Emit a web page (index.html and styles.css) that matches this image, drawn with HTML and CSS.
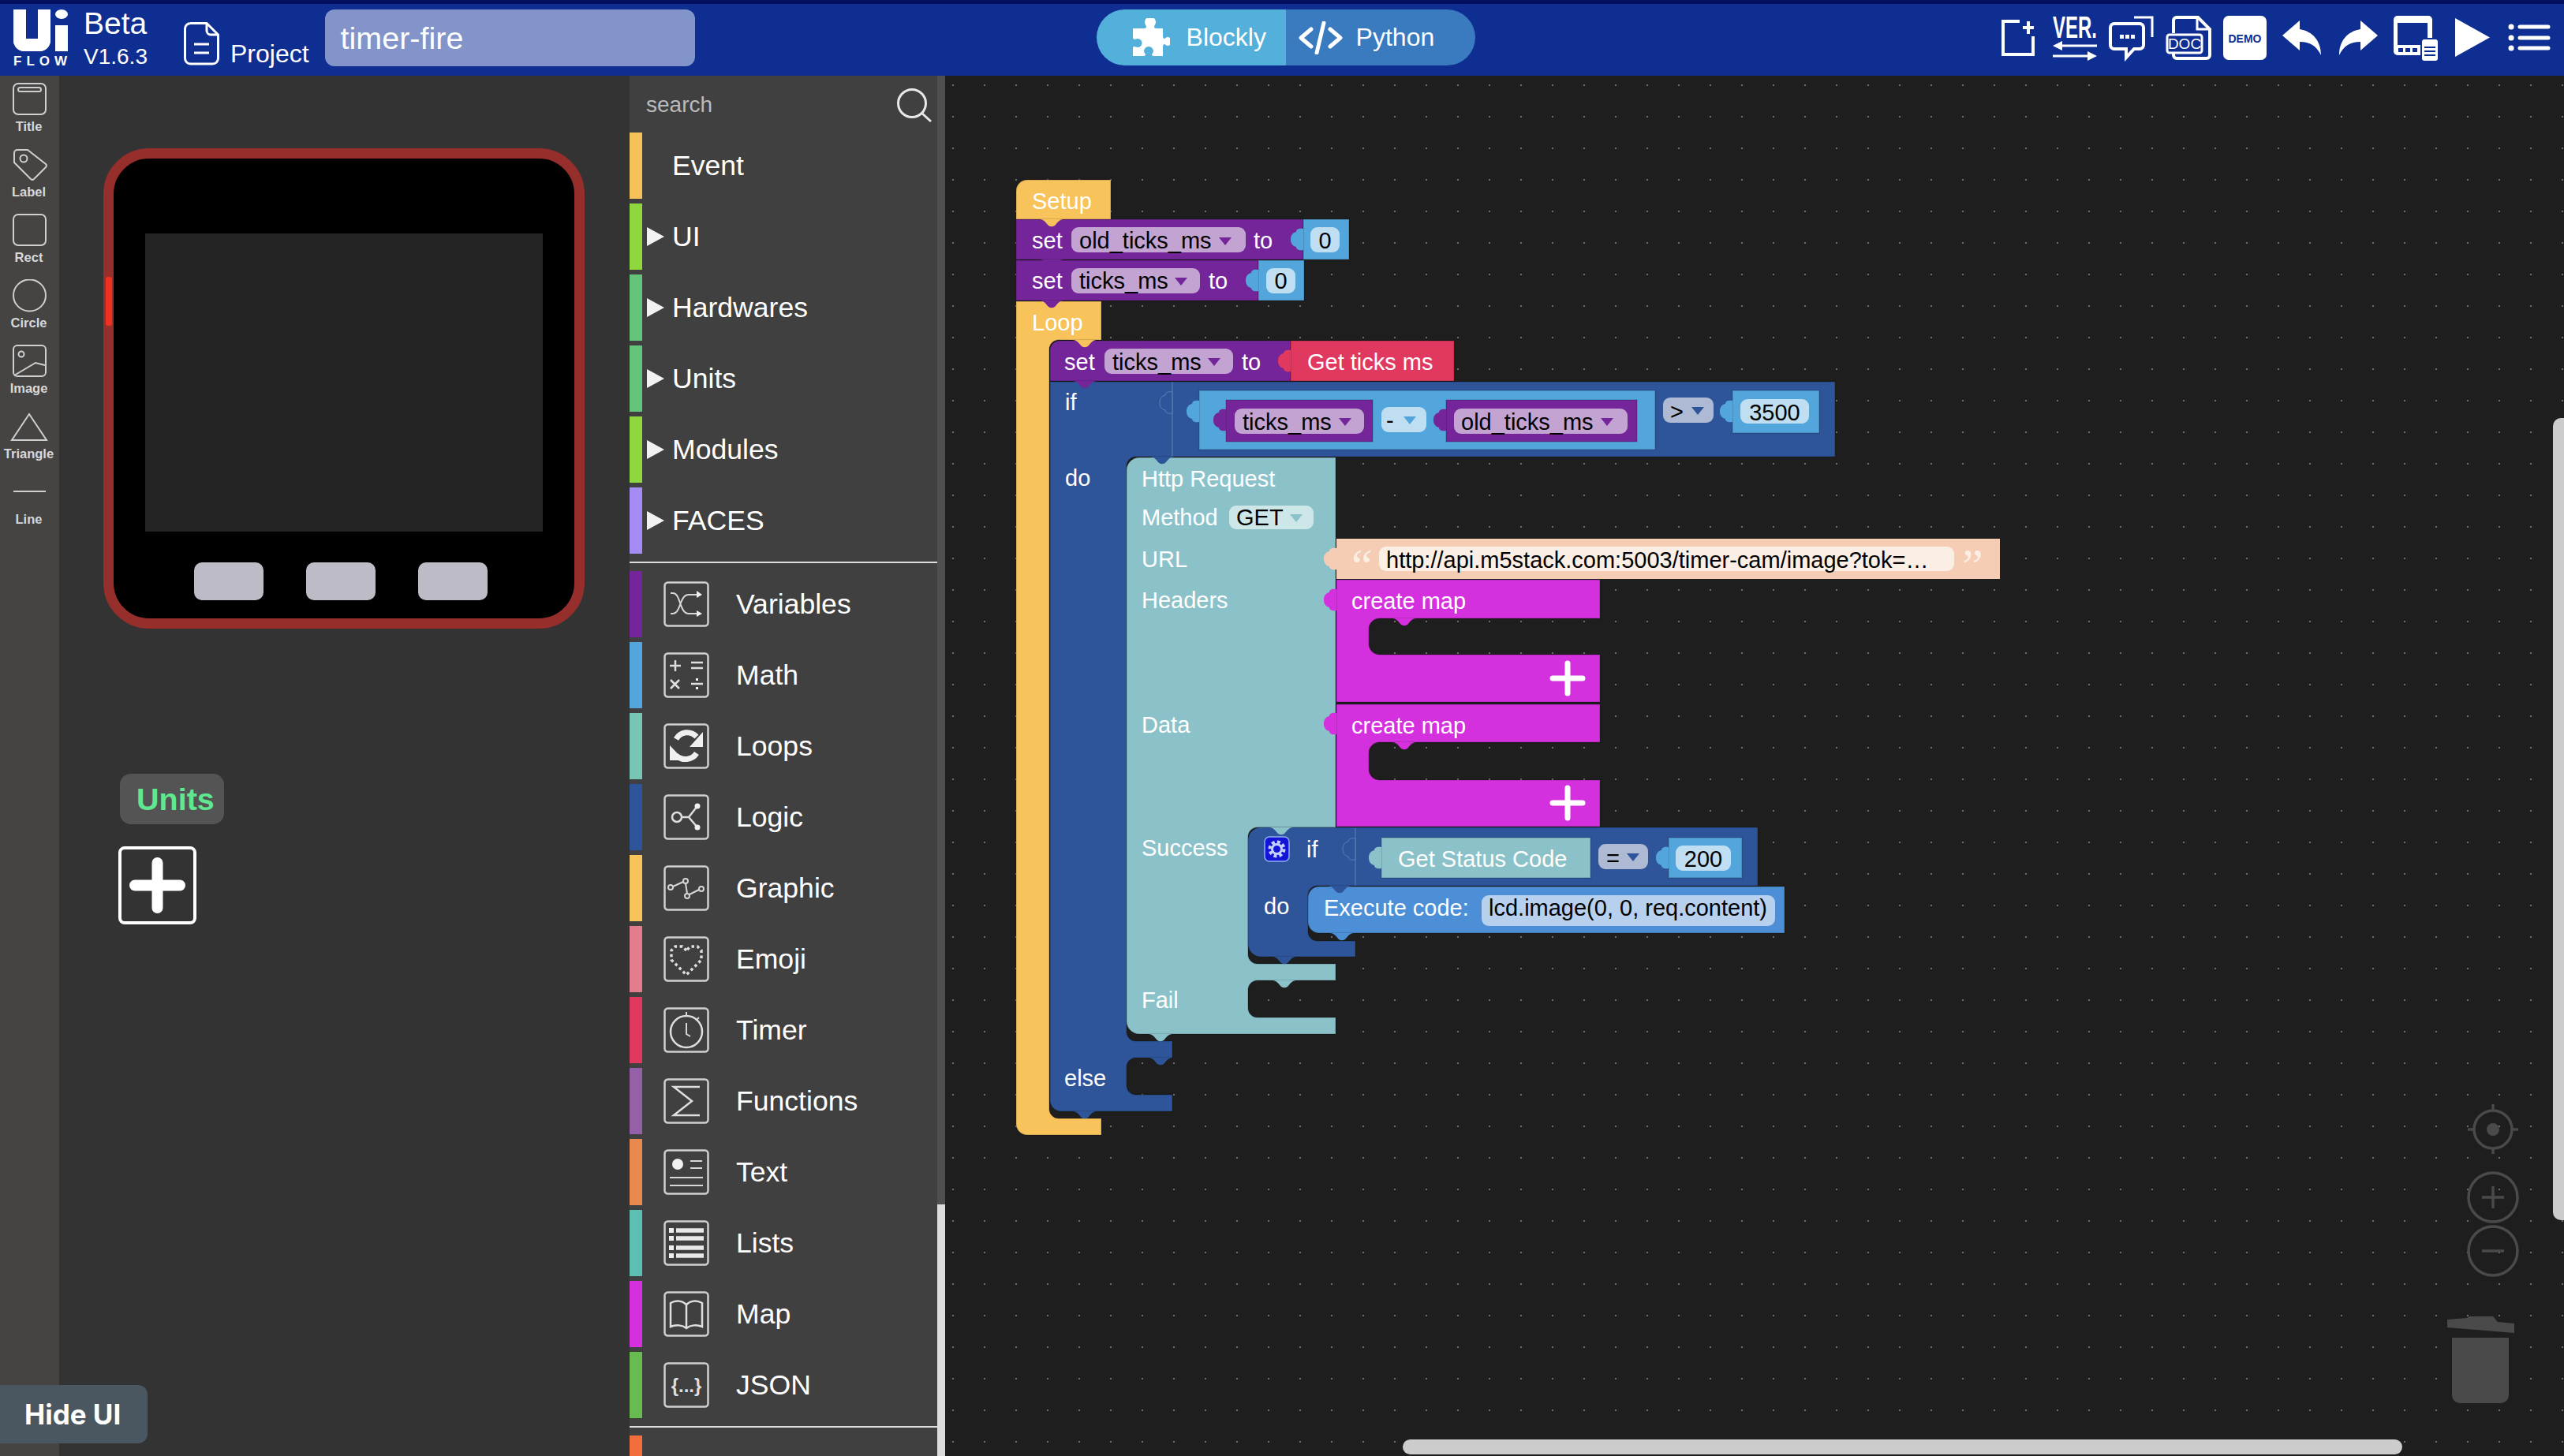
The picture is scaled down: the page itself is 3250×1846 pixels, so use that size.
FILE: index.html
```html
<!DOCTYPE html>
<html lang="en">
<head>
<meta charset="utf-8">
<title>UiFlow - timer-fire</title>
<link rel="stylesheet" href="styles.css">
</head>
<body>
<header class="topbar">
  <div class="logo" role="img" aria-label="UiFlow">
    <div class="logo-mark"><span class="logo-u"></span><span class="logo-i"><i></i><b></b></span></div>
    <div class="logo-flow">FLOW</div>
  </div>
  <div class="version"><div class="beta">Beta</div><div class="vnum">V1.6.3</div></div>
  <div class="project">
    <svg width="45" height="55" viewBox="0 0 45 55"><path class="ic-stroke" d="M8 1.500H29L43.500 16V46a7 7 0 0 1-7 7H8.500a7 7 0 0 1-7-7V8.500a7 7 0 0 1 7-7Z"/><path class="ic-stroke" d="M29 2V11a5 5 0 0 0 5 5H43M13 28H32M13 39H32"/></svg>
    <span>Project</span>
  </div>
  <div class="name-field">timer-fire</div>
  <div class="mode">
    <div class="mode-a">
      <svg width="48" height="50" viewBox="0 0 48 50"><path class="ic-fill" d="M16 5a7 7 0 0 1 14 0c0 3-2 4-2 6 0 1 1 2 3 2h8v10c0 2 1 3 2 3 1 0 2-2 4-2a5.500 5.500 0 0 1 0 11c-2 0-3-2-4-2-1 0-2 1-2 3v12H27c-1 0-2-1-2-2s2-2 2-4a6 6 0 0 0-12 0c0 2 2 3 2 4s-1 2-2 2H1V38c0-2 1-2 2-2s2 1 4 1a5.500 5.500 0 0 0 0-11c-2 0-3 1-4 1s-2-1-2-3V13h14c2 0 3-1 3-2 0-2-2-3-2-6Z"/></svg>
      <span>Blockly</span>
    </div>
    <div class="mode-b">
      <svg width="56" height="42" viewBox="0 0 56 42"><path class="ic-round" d="M16 10 3 21l13 11M40 10l13 11-13 11M32 2 23 40"/></svg>
      <span>Python</span>
    </div>
  </div>
  <nav class="actions">
    <svg width="72" height="96" viewBox="0 0 72 96"><path class="ic-stroke4" d="M38 27H17V69H55V46"/><path class="ic-stroke4" d="M49 27V43M42 35H56"/></svg>
    <svg width="72" height="96" viewBox="0 0 72 96"><text class="ver-text" transform="translate(8 48) scale(1 1.600)">VER.</text><path class="ic-stroke3" d="M20 58H64M8 71H52"/><path class="ic-fill" d="M8 58l12-6v12ZM64 71l-12-6v12Z"/></svg>
    <svg width="72" height="96" viewBox="0 0 72 96"><path class="ic-stroke4" d="M14 30H46a5 5 0 0 1 5 5V57a5 5 0 0 1-5 5H39L29 73V62H14a5 5 0 0 1-5-5V35a5 5 0 0 1 5-5Z"/><path class="ic-stroke3" d="M39 22H62V47"/><path class="ic-fill" d="M21 44h5v5h-5ZM28 44h5v5h-5ZM35 44h5v5h-5Z"/></svg>
    <svg width="72" height="96" viewBox="0 0 72 96"><path class="ic-stroke4" d="M17 42V26a4 4 0 0 1 4-4H48L63 37V70a4 4 0 0 1-4 4H21a4 4 0 0 1-4-4V67"/><path class="ic-stroke3" d="M47 23V37H62"/><rect class="doc-box" x="9" y="44" width="44" height="23" rx="3"/><text class="doc-text" x="31" y="62" text-anchor="middle">DOC</text></svg>
    <svg width="72" height="96" viewBox="0 0 72 96"><rect class="ic-fill" x="8" y="20" width="55" height="56" rx="7"/><text class="demo-text" x="35.500" y="54" text-anchor="middle">DEMO</text></svg>
    <svg width="72" height="96" viewBox="0 0 72 96"><path class="ic-fill" d="M11 45 33 26V37C50 40 60 52 60 70 54 58 46 53 33 53V64Z"/></svg>
    <svg width="72" height="96" viewBox="0 0 72 96"><path class="ic-fill" d="M60 45 38 26V37C21 40 11 52 11 70 17 58 25 53 38 53V64Z"/></svg>
    <svg width="72" height="96" viewBox="0 0 72 96"><rect class="ic-fill" x="8" y="20" width="49" height="50" rx="5"/><rect class="hole" x="13" y="29" width="38" height="28" /><path class="hole" d="M14 61h6v5h-6ZM23 61h6v5h-6ZM32 61h6v5h-6Z"/><rect class="hole" x="42" y="48" width="24" height="30"/><rect class="ic-fill" x="44" y="50" width="20" height="27" rx="3"/><path class="hole-line" d="M47 60H61M47 65H61M47 70H61"/></svg>
    <svg width="72" height="96" viewBox="0 0 72 96"><path class="ic-fill" d="M14 23 58 47.500 14 72Z"/></svg>
    <svg width="72" height="96" viewBox="0 0 72 96"><path class="ic-stroke4r" d="M24 34H60M24 48H60M24 61H60"/><path class="ic-dots" d="M13 34h.1M13 48h.1M13 61h.1"/></svg>
  </nav>
</header>

<main class="main">
  <aside class="rail">
    <div class="tool"><svg width="70" height="42" viewBox="0 0 70 42"><rect class="r-line" x="15" y="1" width="41" height="39" rx="6"/><rect class="r-line" x="21" y="6" width="29" height="5" rx="2.500"/></svg><span>Title</span></div>
    <div class="tool"><svg width="70" height="42" viewBox="0 0 70 42"><path class="r-line" d="M20 2H33L56 20a3 3 0 0 1 0 4L41 39a3 3 0 0 1-4 0L16 18V6a4 4 0 0 1 4-4Z"/><circle class="r-line" cx="28" cy="13" r="4.500"/></svg><span>Label</span></div>
    <div class="tool"><svg width="70" height="42" viewBox="0 0 70 42"><rect class="r-line" x="15" y="1" width="41" height="39" rx="6"/></svg><span>Rect</span></div>
    <div class="tool"><svg width="70" height="42" viewBox="0 0 70 42"><ellipse class="r-line" cx="35.500" cy="20.500" rx="20.500" ry="20"/></svg><span>Circle</span></div>
    <div class="tool"><svg width="70" height="42" viewBox="0 0 70 42"><rect class="r-line" x="15" y="1" width="41" height="39" rx="5"/><circle class="r-line" cx="25" cy="12" r="3.500"/><path class="r-line" d="M16 39 43 23 55 26"/></svg><span>Image</span></div>
    <div class="tool"><svg width="70" height="42" viewBox="0 0 70 42"><path class="r-line" d="M35 5 13 38H57Z"/></svg><span>Triangle</span></div>
    <div class="tool"><svg width="70" height="42" viewBox="0 0 70 42"><path class="r-line" d="M15 20H56"/></svg><span>Line</span></div>
  </aside>

  <section class="stage">
    <div class="device">
      <span class="side-mark"></span>
      <div class="screen"></div>
      <div class="hw-buttons"><span></span><span></span><span></span></div>
    </div>
    <div class="units-tag">Units</div>
    <div class="units-add"><svg width="71" height="71" viewBox="0 0 71 71"><path class="plus-big" d="M35.500 7V64M7 35.500H64"/></svg></div>
  </section>

  <aside class="toolbox">
    <div class="tb-list">
      <div class="search"><span>search</span>
        <svg width="46" height="44" viewBox="0 0 46 44"><circle class="s-line" cx="20" cy="19" r="17.500"/><path class="s-line" d="M32 31 44 42"/></svg>
      </div>
      <div class="cats">
        <div class="cat c-event"><span class="no-caret"></span>Event</div>
        <div class="cat c-lime"><span class="caret"></span>UI</div>
        <div class="cat c-green"><span class="caret"></span>Hardwares</div>
        <div class="cat c-green"><span class="caret"></span>Units</div>
        <div class="cat c-lime"><span class="caret"></span>Modules</div>
        <div class="cat c-faces"><span class="caret"></span>FACES</div>
      </div>
      <div class="tb-rule"></div>
      <div class="cats">
        <div class="cat lib c-var"><svg width="58" height="58" viewBox="0 0 58 58"><rect class="box" x="1.500" y="1.500" width="55" height="55" rx="4"/><path class="i-line" d="M9 15H12C22 15 20 41 32 41H44M9 41H12C22 41 20 17 32 17H44"/><path class="i-fill" d="M42 12 49 17 42 21ZM42 37 49 41 42 45Z"/></svg>Variables</div>
        <div class="cat lib c-math"><svg width="58" height="58" viewBox="0 0 58 58"><rect class="box" x="1.500" y="1.500" width="55" height="55" rx="4"/><path class="i-line2" d="M8 17H22M15 10V24M35 13H50M35 20H50M9 35 20 46M20 35 9 46M35 40H50"/><path class="i-fill" d="M41 33h3v3h-3ZM41 44h3v3h-3Z"/></svg>Math</div>
        <div class="cat lib c-loop"><svg width="58" height="58" viewBox="0 0 58 58"><rect class="box" x="1.500" y="1.500" width="55" height="55" rx="4"/><path class="i-thick" d="M16 20C22 10 34 9 42 17M42 38C36 47 24 48 16 41"/><path class="i-fill" d="M50 11V30H33ZM8 28V47H26Z"/></svg>Loops</div>
        <div class="cat lib c-logic"><svg width="58" height="58" viewBox="0 0 58 58"><rect class="box" x="1.500" y="1.500" width="55" height="55" rx="4"/><circle class="i-line2" cx="17" cy="29" r="6"/><path class="i-line2" d="M23 29H32L43 15M32 29 43 42"/><circle class="i-fill" cx="43" cy="15" r="3.500"/><circle class="i-fill" cx="43" cy="42" r="3.500"/></svg>Logic</div>
        <div class="cat lib c-graphic"><svg width="58" height="58" viewBox="0 0 58 58"><rect class="box" x="1.500" y="1.500" width="55" height="55" rx="4"/><path class="i-line" d="M12 27 25 21M28 23 30 36M33 37 45 31"/><circle class="i-line" cx="9" cy="28" r="3"/><circle class="i-line" cx="28" cy="20" r="3"/><circle class="i-line" cx="30" cy="39" r="3"/><circle class="i-line" cx="48" cy="30" r="3"/></svg>Graphic</div>
        <div class="cat lib c-emoji"><svg width="58" height="58" viewBox="0 0 58 58"><rect class="box" x="1.500" y="1.500" width="55" height="55" rx="4"/><path class="i-dots" d="M29 18 24 13H15L10 18V30L29 49 48 30V18L43 13H34Z"/></svg>Emoji</div>
        <div class="cat lib c-timer"><svg width="58" height="58" viewBox="0 0 58 58"><rect class="box" x="1.500" y="1.500" width="55" height="55" rx="4"/><circle class="i-line2" cx="29" cy="31" r="20"/><path class="i-line" d="M29 6V11M45 13 42 16M29 20V34L34 37"/></svg>Timer</div>
        <div class="cat lib c-func"><svg width="58" height="58" viewBox="0 0 58 58"><rect class="box" x="1.500" y="1.500" width="55" height="55" rx="4"/><path class="i-line2" d="M46 11H13L36 29 13 47H46"/></svg>Functions</div>
        <div class="cat lib c-text"><svg width="58" height="58" viewBox="0 0 58 58"><rect class="box" x="1.500" y="1.500" width="55" height="55" rx="4"/><circle class="i-fill" cx="18" cy="19" r="7"/><path class="i-line" d="M34 15H49M34 24H49M8 36H50M8 46H50"/></svg>Text</div>
        <div class="cat lib c-list"><svg width="58" height="58" viewBox="0 0 58 58"><rect class="box" x="1.500" y="1.500" width="55" height="55" rx="4"/><path class="i-bars" d="M16 13H51M16 23H51M16 35H51M16 45H51"/><path class="i-fill" d="M7 10h6v6H7ZM7 20h6v6H7ZM7 32h6v6H7ZM7 42h6v6H7Z"/></svg>Lists</div>
        <div class="cat lib c-map"><svg width="58" height="58" viewBox="0 0 58 58"><rect class="box" x="1.500" y="1.500" width="55" height="55" rx="4"/><path class="i-line2" d="M29 17C24 12 16 11 9 15V45C16 42 24 43 29 47 34 43 42 42 49 45V15C42 11 34 12 29 17ZM29 17V47"/></svg>Map</div>
        <div class="cat lib c-json"><svg width="58" height="58" viewBox="0 0 58 58"><rect class="box" x="1.500" y="1.500" width="55" height="55" rx="4"/><text class="json-text" x="29" y="38" text-anchor="middle">{...}</text></svg>JSON</div>
      </div>
      <div class="tb-rule"></div>
      <div class="cats"><div class="cat c-more"></div></div>
    </div>
    <div class="tb-track"><div class="tb-thumb"></div></div>
  </aside>

  <section class="workspace">
    <svg class="canvas" width="2052" height="1750" viewBox="1198 96 2052 1750">
      <defs>
        <path id="vt" d="M0 0C-6-1-9 1-9 4-14 5-16 9-16 13.500-16 18-14 22-9 23-9 26-6 28 0 27Z"/>
        <path id="nt" d="M-15 0H15C11 0 8 3 5 7 2 10-2 10-5 7-8 3-11 0-15 0Z"/>
        <path id="ar" d="M-8-5H8L0 5Z"/>
      </defs>

      <!-- Loop -->
      <path class="y edge" d="M1288 382H1396V431H1342a12 12 0 0 0-12 12V1406a12 12 0 0 0 12 12H1396V1439H1302a14 14 0 0 1-14-14Z"/>
      <text class="t" x="1308" y="419">Loop</text>

      <!-- if / do / else -->
      <path class="ib edge" d="M1331 484H2326V579H1440a12 12 0 0 0-12 12V1308a12 12 0 0 0 12 12H1486V1341H1440a12 12 0 0 0-12 12V1376a12 12 0 0 0 12 12H1486V1409H1345a14 14 0 0 1-14-14Z"/>
      <path class="sep" d="M1486 484V579"/>
      <text class="t" x="1350" y="520">if</text>
      <text class="t" x="1350" y="616">do</text>
      <text class="t" x="1349" y="1377">else</text>

      <!-- condition -->
      <rect class="mb edge" x="1520" y="495" width="578" height="75"/>
      <rect class="p edge" x="1554" y="507" width="186" height="53"/>
      <rect class="lp" x="1565" y="518" width="164" height="32" rx="9"/>
      <text class="ft" x="1575" y="545">ticks_ms</text>
      <use href="#ar" x="1705" y="535" class="p"/>
      <rect class="lb" x="1751" y="516" width="57" height="32" rx="9"/>
      <text class="ft" x="1757" y="543">-</text>
      <use href="#ar" x="1787" y="533" class="mb"/>
      <rect class="p edge" x="1833" y="507" width="242" height="53"/>
      <rect class="lp" x="1843" y="518" width="220" height="32" rx="9"/>
      <text class="ft" x="1852" y="545">old_ticks_ms</text>
      <use href="#ar" x="2037" y="535" class="p"/>
      <rect class="gb" x="2108" y="504" width="64" height="32" rx="9"/>
      <text class="ft" x="2117" y="532">&gt;</text>
      <use href="#ar" x="2152" y="521" class="ib"/>
      <rect class="mb edge" x="2196" y="495" width="110" height="54"/>
      <rect class="lb" x="2206" y="506" width="87" height="31" rx="9"/>
      <text class="ft" x="2249.500" y="533" text-anchor="middle">3500</text>
      <use href="#vt" x="1486" y="497" class="ib outl"/>
      <use href="#vt" x="1520" y="508" class="mb"/>
      <use href="#vt" x="1554" y="519" class="p"/>
      <use href="#vt" x="1833" y="519" class="p"/>
      <use href="#vt" x="2196" y="508" class="mb"/>

      <!-- Http Request -->
      <path class="te edge" d="M1444 580H1693V1049H1594a12 12 0 0 0-12 12V1210a12 12 0 0 0 12 12H1693V1243H1594a12 12 0 0 0-12 12V1278a12 12 0 0 0 12 12H1693V1311H1444a16 16 0 0 1-16-16V596a16 16 0 0 1 16-16Z"/>
      <text class="t" x="1447" y="617">Http Request</text>
      <text class="t" x="1447" y="666">Method</text>
      <rect class="lt" x="1558" y="641" width="107" height="30" rx="9"/>
      <text class="ft" x="1567" y="666">GET</text>
      <use href="#ar" x="1643" y="657" class="te"/>
      <text class="t" x="1447" y="719">URL</text>
      <text class="t" x="1447" y="771">Headers</text>
      <text class="t" x="1447" y="929">Data</text>
      <text class="t" x="1447" y="1085">Success</text>
      <text class="t" x="1447" y="1278">Fail</text>

      <!-- URL string -->
      <rect class="pe" x="1694" y="683" width="841" height="51"/>
      <use href="#vt" x="1694" y="695" class="pe"/>
      <text class="quote" x="1713" y="737">“</text>
      <rect class="lpe" x="1748" y="693" width="729" height="31" rx="9"/>
      <text class="ft" x="1757" y="720">http://api.m5stack.com:5003/timer-cam/image?tok=…</text>
      <text class="quote" x="2487" y="737">”</text>

      <!-- create map -->
      <path class="mg edge" d="M1694 735H2028V784H1749a14 14 0 0 0-14 14V816a14 14 0 0 0 14 14H2028V890H1694Z"/>
      <use href="#vt" x="1694" y="747" class="mg"/>
      <text class="t" x="1713" y="772">create map</text>
      <path class="plus" d="M1987 841V879M1968 860H2006"/>
      <path class="mg edge" d="M1694 893H2028V941H1749a14 14 0 0 0-14 14V975a14 14 0 0 0 14 14H2028V1048H1694Z"/>
      <use href="#vt" x="1694" y="904" class="mg"/>
      <text class="t" x="1713" y="930">create map</text>
      <path class="plus" d="M1987 999V1037M1968 1018H2006"/>
      <use href="#nt" x="1780" y="784" class="mg"/>
      <use href="#nt" x="1780" y="941" class="mg"/>

      <!-- inner if -->
      <path class="ib edge" d="M1598 1049H2228V1123H1670a12 12 0 0 0-12 12V1181a12 12 0 0 0 12 12H1718V1213H1598a16 16 0 0 1-16-16V1065a16 16 0 0 1 16-16Z"/>
      <path class="sep" d="M1718 1050V1123"/>
      <rect class="gear-btn" x="1603" y="1061" width="31" height="31" rx="6"/>
      <circle class="gear-teeth" cx="1618.500" cy="1076.500" r="9"/>
      <circle class="gear-ring" cx="1618.500" cy="1076.500" r="6"/>
      <text class="t" x="1656" y="1087">if</text>
      <text class="t" x="1602" y="1159">do</text>
      <use href="#vt" x="1718" y="1063" class="ib outl"/>
      <rect class="te edge" x="1751" y="1062" width="265" height="51"/>
      <use href="#vt" x="1751" y="1074" class="te"/>
      <text class="t" x="1772" y="1099">Get Status Code</text>
      <rect class="gb" x="2026" y="1070" width="63" height="32" rx="9"/>
      <text class="ft" x="2036" y="1098">=</text>
      <use href="#ar" x="2070" y="1087" class="ib"/>
      <rect class="mb edge" x="2115" y="1062" width="93" height="51"/>
      <use href="#vt" x="2115" y="1074" class="mb"/>
      <rect class="lb" x="2124" y="1072" width="70" height="32" rx="9"/>
      <text class="ft" x="2159" y="1099" text-anchor="middle">200</text>

      <!-- Execute code -->
      <path class="ex edge" d="M1672 1124H2262V1183H1672a14 14 0 0 1-14-14V1138a14 14 0 0 1 14-14Z"/>
      <text class="t" x="1678" y="1161">Execute code:</text>
      <rect class="lx" x="1878" y="1135" width="372" height="39" rx="9"/>
      <text class="ft" x="1887" y="1161">lcd.image(0, 0, req.content)</text>

      <!-- Setup -->
      <path class="p edge" d="M1288 330H1595V381H1288Z"/>
      <text class="t" x="1308" y="366">set</text>
      <rect class="lp" x="1358" y="340" width="163" height="32" rx="9"/>
      <text class="ft" x="1368" y="366">ticks_ms</text>
      <use href="#ar" x="1497" y="357" class="p"/>
      <text class="t" x="1532" y="366">to</text>
      <rect class="mb edge" x="1595" y="330" width="58" height="51"/>
      <use href="#vt" x="1595" y="342" class="mb"/>
      <rect class="lb" x="1605" y="340" width="37" height="32" rx="9"/>
      <text class="ft" x="1623.500" y="366" text-anchor="middle">0</text>

      <path class="p edge" d="M1288 278H1652V329H1288Z"/>
      <text class="t" x="1308" y="315">set</text>
      <rect class="lp" x="1358" y="288" width="221" height="32" rx="9"/>
      <text class="ft" x="1368" y="315">old_ticks_ms</text>
      <use href="#ar" x="1553" y="306" class="p"/>
      <text class="t" x="1589" y="315">to</text>
      <rect class="mb edge" x="1652" y="278" width="58" height="51"/>
      <use href="#vt" x="1652" y="290" class="mb"/>
      <rect class="lb" x="1661" y="288" width="37" height="32" rx="9"/>
      <text class="ft" x="1679.500" y="315" text-anchor="middle">0</text>

      <path class="y edge" d="M1288 278V242a14 14 0 0 1 14-14H1408V278Z"/>
      <text class="t" x="1308" y="265">Setup</text>

      <!-- set ticks inside Loop -->
      <path class="p edge" d="M1343 432H1636V483H1331V444a12 12 0 0 1 12-12Z"/>
      <text class="t" x="1349" y="469">set</text>
      <rect class="lp" x="1400" y="442" width="163" height="32" rx="9"/>
      <text class="ft" x="1410" y="469">ticks_ms</text>
      <use href="#ar" x="1539" y="459" class="p"/>
      <text class="t" x="1574" y="469">to</text>
      <rect class="rd edge" x="1636" y="432" width="207" height="51"/>
      <use href="#vt" x="1636" y="444" class="rd"/>
      <text class="t" x="1657" y="469">Get ticks ms</text>

      <!-- connector notches -->
      <use href="#nt" x="1333" y="278" class="y"/>
      <use href="#nt" x="1333" y="329" class="p"/>
      <use href="#nt" x="1333" y="381" class="p"/>
      <use href="#nt" x="1375" y="431" class="y"/>
      <use href="#nt" x="1375" y="483" class="p"/>
      <use href="#nt" x="1473" y="579" class="ib"/>
      <use href="#nt" x="1624" y="1049" class="te"/>
      <use href="#nt" x="1698" y="1123" class="ib"/>
      <use href="#nt" x="1701" y="1183" class="ex"/>
      <use href="#nt" x="1628" y="1213" class="ib"/>
      <use href="#nt" x="1628" y="1243" class="te"/>
      <use href="#nt" x="1471" y="1311" class="te"/>
      <use href="#nt" x="1471" y="1341" class="ib"/>
      <use href="#nt" x="1375" y="1409" class="ib"/>

      <!-- workspace controls -->
      <g class="ctl">
        <circle cx="3160" cy="1432" r="24"/>
        <path d="M3160 1400V1408M3160 1456V1463M3128 1432H3136M3184 1432H3192"/>
        <circle class="ctl-fill" cx="3160" cy="1432" r="8"/>
        <circle cx="3160" cy="1518" r="31"/>
        <path d="M3146 1518H3174M3160 1504V1532"/>
        <circle cx="3160" cy="1586" r="31"/>
        <path d="M3146 1586H3174"/>
      </g>
      <path class="ctl-fill" d="M3102 1673 3127 1671 3130 1669H3160L3166 1676 3187 1678V1690L3102 1683Z"/>
      <path class="ctl-fill" d="M3108 1696H3180V1769a10 10 0 0 1-10 10H3118a10 10 0 0 1-10-10Z"/>
    </svg>
    <div class="vscroll"></div>
    <div class="hscroll"></div>
  </section>

  <div class="hide-ui">Hide UI</div>
</main>
</body>
</html>
```
FILE: styles.css
```css
* { box-sizing: border-box; }
html, body { margin: 0; padding: 0; }
body {
  width: 3250px;
  height: 1846px;
  overflow: hidden;
  background: #1e1e1e;
  font-family: "Liberation Sans", Arial, sans-serif;
  color: #fff;
}

/* ---------- header ---------- */
.topbar {
  display: flex;
  height: 96px;
  padding-left: 17px;
  background: #0f2e92;
  box-shadow: inset 0 5px 0 #020e5e;
}
.logo { width: 69px; padding-top: 12px; }
.logo-mark { display: flex; justify-content: space-between; height: 53px; }
.logo-u {
  width: 47px;
  height: 53px;
  border: 16px solid #fff;
  border-top: 0;
  border-radius: 0 0 14px 14px;
}
.logo-i { display: flex; flex-direction: column; width: 16px; gap: 8px; }
.logo-i i { height: 12px; border-radius: 50%; background: #fff; }
.logo-i b { height: 33px; background: #fff; }
.logo-flow {
  margin-top: 5px;
  font-size: 17px;
  font-weight: 700;
  line-height: 16px;
  letter-spacing: 6px;
  white-space: nowrap;
}
.version { width: 81px; margin-left: 20px; padding-top: 10px; }
.beta { font-size: 39px; line-height: 39px; }
.vnum { margin-top: 9px; font-size: 28px; line-height: 28px; }
.project {
  display: flex;
  align-items: flex-end;
  gap: 14px;
  margin-left: 46px;
  padding-bottom: 12px;
  font-size: 32px;
  line-height: 32px;
}
.project svg { margin-bottom: 1px; }
.name-field {
  display: flex;
  align-items: center;
  width: 469px;
  height: 72px;
  margin: 12px 0 0 20px;
  padding-left: 20px;
  border-radius: 12px;
  background: #8294c9;
  font-size: 39.500px;
}
.mode {
  display: flex;
  width: 480px;
  height: 71px;
  margin: 12px 0 0 509px;
  border-radius: 36px;
  overflow: hidden;
  font-size: 32px;
}
.mode-a, .mode-b { display: flex; align-items: center; }
.mode-a { width: 240px; padding-left: 45px; gap: 21px; background: #53b0db; }
.mode-b { width: 240px; padding-left: 16px; gap: 17px; background: #3a7abf; }
.actions { display: flex; margin-left: auto; padding-right: 8px; }

.ic-fill { fill: #fff; }
.ic-stroke { fill: none; stroke: #fff; stroke-width: 3; }
.ic-stroke3 { fill: none; stroke: #fff; stroke-width: 3; }
.ic-stroke4 { fill: none; stroke: #fff; stroke-width: 4; }
.ic-stroke4r { fill: none; stroke: #fff; stroke-width: 5; stroke-linecap: round; }
.ic-dots { fill: none; stroke: #fff; stroke-width: 7; stroke-linecap: round; }
.ic-round { fill: none; stroke: #fff; stroke-width: 5; stroke-linecap: round; stroke-linejoin: round; }
.ver-text { font: 700 24px "Liberation Sans", sans-serif; fill: #fff; }
.doc-box { fill: #0f2e92; stroke: #fff; stroke-width: 3; }
.doc-text { font: 400 19px "Liberation Sans", sans-serif; fill: #fff; }
.demo-text { font: 700 14px "Liberation Sans", sans-serif; fill: #0f2e92; }
.hole { fill: #0f2e92; }
.hole-line { fill: none; stroke: #0f2e92; stroke-width: 2; }

/* ---------- main ---------- */
.main { position: relative; display: flex; height: 1750px; }

.rail {
  display: flex;
  flex-direction: column;
  flex: none;
  width: 75px;
  padding: 9px 2px 0 0;
  background: #454443;
}
.tool {
  display: flex;
  flex-direction: column;
  align-items: center;
  height: 83px;
  color: #d8d8d8;
  font-size: 16.500px;
  font-weight: 700;
  line-height: 20px;
}
.tool svg { margin-bottom: 3px; }
.r-line { fill: none; stroke: #cfcfcf; stroke-width: 2; }

.stage { flex: none; width: 723px; padding: 92px 0 0 56px; background: #333; }
.device {
  position: relative;
  width: 610px;
  height: 609px;
  padding: 95px 40px 0;
  border: 13px solid #962e2b;
  border-radius: 58px;
  background: #000;
}
.side-mark {
  position: absolute;
  left: -10px;
  top: 150px;
  width: 8px;
  height: 62px;
  border-radius: 3px;
  background: #ef3124;
}
.screen { width: 504px; height: 378px; background: #232323; }
.hw-buttons { display: flex; gap: 54px; margin-top: 39px; padding-left: 62px; }
.hw-buttons span { width: 88px; height: 48px; border-radius: 10px; background: #bdbcc6; }
.units-tag {
  display: flex;
  align-items: center;
  width: 132px;
  height: 64px;
  margin: 184px 0 0 21px;
  padding-left: 21px;
  border-radius: 14px;
  background: #545454;
  color: #60e890;
  font-size: 39.500px;
  font-weight: 700;
}
.units-add {
  display: flex;
  align-items: center;
  justify-content: center;
  width: 99px;
  height: 99px;
  margin: 28px 0 0 19px;
  border: 4px solid #fff;
  border-radius: 8px;
}
.plus-big { fill: none; stroke: #fff; stroke-width: 14; stroke-linecap: round; }

/* ---------- toolbox ---------- */
.toolbox { display: flex; flex: none; width: 400px; height: 1750px; overflow: hidden; background: #404040; }
.tb-list { width: 390px; }
.tb-track { width: 10px; padding-top: 1431px; background: #4f4f4f; }
.tb-thumb { height: 319px; background: #dcdcdc; }
.search {
  display: flex;
  justify-content: space-between;
  align-items: flex-start;
  height: 72px;
  padding: 15px 6px 0 21px;
  color: #bbb;
  font-size: 28px;
  line-height: 44px;
}
.search svg { margin-top: 1px; }
.s-line { fill: none; stroke: #e8e8e8; stroke-width: 3; }
.cats { display: flex; flex-direction: column; gap: 6px; }
.cat {
  display: flex;
  align-items: center;
  flex: none;
  height: 84px;
  border-left: 16px solid #888;
  font-size: 35.600px;
}
.caret {
  width: 0;
  height: 0;
  margin: 0 10px 0 6px;
  border-left: 22px solid #f2f2f2;
  border-top: 12.500px solid transparent;
  border-bottom: 12.500px solid transparent;
}
.no-caret { width: 38px; }
.lib { gap: 34px; padding-left: 27px; }
.tb-rule { height: 2px; margin: 10px 0; background: #dedede; }
.c-event { border-color: #f5c158; }
.c-lime { border-color: #8ed73f; }
.c-green { border-color: #64c57a; }
.c-faces { border-color: #a58cf5; }
.c-var { border-color: #75259a; }
.c-math { border-color: #52a6dc; }
.c-loop { border-color: #77c6b5; }
.c-logic { border-color: #2e5599; }
.c-graphic { border-color: #f7c35a; }
.c-emoji { border-color: #e37d8c; }
.c-timer { border-color: #e0385f; }
.c-func { border-color: #9460a8; }
.c-text { border-color: #e8894f; }
.c-list { border-color: #5cbfb3; }
.c-map { border-color: #d430de; }
.c-json { border-color: #68bb4e; }
.c-more { border-color: #f26e3c; }

.box { fill: none; stroke: #cfcfcf; stroke-width: 2.500; }
.i-line { fill: none; stroke: #d6d6d6; stroke-width: 2; }
.i-line2 { fill: none; stroke: #dedede; stroke-width: 2.500; }
.i-thick { fill: none; stroke: #f0f0f0; stroke-width: 7; }
.i-fill { fill: #f0f0f0; }
.i-bars { fill: none; stroke: #e8e8e8; stroke-width: 5.500; }
.i-dots { fill: none; stroke: #dedede; stroke-width: 3.500; stroke-dasharray: 3.500 3.500; }
.json-text { font: 700 24px "Liberation Sans", sans-serif; fill: #dedede; letter-spacing: 0; }

/* ---------- workspace ---------- */
.workspace {
  position: relative;
  flex: 1;
  min-width: 0;
  background-color: #1e1e1e;
  background-image: radial-gradient(circle, #6a6a6a 1.100px, transparent 1.600px);
  background-size: 40px 40px;
  background-position: -10px -8px;
  overflow: hidden;
}
.canvas { display: block; }
.t, .ft, .quote { font-family: "Liberation Sans", Arial, sans-serif; font-size: 29px; }
.t { fill: #fff; }
.ft { fill: #000; }
.quote { fill: #fbeee5; font-size: 60px; font-family: "Liberation Serif", serif; }

.edge { stroke: rgba(0, 0, 0, .18); stroke-width: 1.500; }
.y { fill: #f7c35a; }
.p { fill: #75259a; }
.lp { fill: #c3a3d1; }
.mb { fill: #52a6dc; }
.lb { fill: #c0def2; }
.ib { fill: #2e5599; }
.te { fill: #8bc2ca; }
.lt { fill: #cde6e8; }
.pe { fill: #f5cdb5; }
.lpe { fill: #fbeee5; }
.mg { fill: #d430de; }
.rd { fill: #e0385f; }
.ex { fill: #4d8fd6; }
.lx { fill: #b6d0ee; }
.gb { fill: #aeb9d4; }
.sep { fill: none; stroke: #5f80b8; stroke-width: 1; }
.outl { stroke: #5f80b8; stroke-width: 1; }
.plus { fill: none; stroke: #fff; stroke-width: 7; stroke-linecap: round; }
.gear-btn { fill: #1414d8; stroke: #8fb0f0; stroke-width: 1.500; }
.gear-teeth { fill: none; stroke: #c4d0ff; stroke-width: 4; stroke-dasharray: 4 3.070; }
.gear-ring { fill: none; stroke: #c4d0ff; stroke-width: 3; }
.ctl { fill: none; stroke: #4a4a4a; stroke-width: 3.500; }
.ctl-fill { fill: #4a4a4a; stroke: none; }

.vscroll {
  position: absolute;
  right: 0;
  top: 434px;
  width: 14px;
  height: 1017px;
  border-radius: 10px 0 0 10px;
  background: #ccc;
}
.hscroll {
  position: absolute;
  left: 580px;
  top: 1729px;
  width: 1267px;
  height: 19px;
  border-radius: 10px;
  background: #ccc;
}
.hide-ui {
  position: absolute;
  left: 0;
  top: 1660px;
  width: 187px;
  height: 74px;
  padding-left: 31px;
  border-radius: 0 12px 12px 0;
  background: #4a5660;
  font-family: Inter, "Liberation Sans", sans-serif;
  font-size: 35px;
  font-weight: 700;
  line-height: 74px;
}
```
